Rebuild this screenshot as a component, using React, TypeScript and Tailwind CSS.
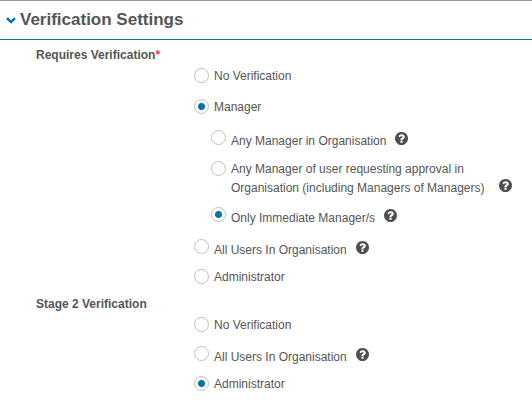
import { useState } from "react";

type Option = {
  value: string;
  label: string;
  help?: boolean;
  nested?: boolean;
  spacing: string;
};

const primaryOptions: Option[] = [
  { value: "none", label: "No Verification", spacing: "mb-3" },
  { value: "manager", label: "Manager", spacing: "mb-3" },
  { value: "any-manager", label: "Any Manager in Organisation", help: true, nested: true, spacing: "mb-[9px]" },
  {
    value: "any-manager-of-user",
    label: "Any Manager of user requesting approval in Organisation (including Managers of Managers)",
    help: true,
    nested: true,
    spacing: "mb-2",
  },
  { value: "immediate", label: "Only Immediate Manager/s", help: true, nested: true, spacing: "mb-[10px]" },
  { value: "all-users", label: "All Users In Organisation", help: true, spacing: "mb-2" },
  { value: "admin", label: "Administrator", spacing: "mb-2" },
];

const stageTwoOptions: Option[] = [
  { value: "none", label: "No Verification", spacing: "mb-[10px]" },
  { value: "all-users", label: "All Users In Organisation", help: true, spacing: "mb-2" },
  { value: "admin", label: "Administrator", spacing: "mb-2" },
];

function HelpIcon() {
  return (
    <svg viewBox="128 128 1536 1536" className="size-[13px] fill-[#4f4f4f]" aria-hidden="true">
      <path d="M1024 1376v-192q0-14-9-23t-23-9h-192q-14 0-23 9t-9 23v192q0 14 9 23t23 9h192q14 0 23-9t9-23zm256-672q0-88-55.5-163t-138.5-116-170-41q-243 0-371 213-15 24 8 42l132 100q7 6 19 6 16 0 25-12 53-68 86-92 34-24 86-24 48 0 85.5 26t37.5 59q0 38-20 61t-68 45q-63 28-115.5 86.5t-52.5 125.5v36q0 14 9 23t23 9h192q14 0 23-9t9-23q0-19 21.5-49.5t54.5-49.5q32-18 49-28.5t46-35 44.5-48 28-60.5 12.5-81zm384 192q0 209-103 385.5t-279.5 279.5-385.5 103-385.5-103-279.5-279.5-103-385.5 103-385.5 279.5-279.5 385.5-103 385.5 103 279.5 279.5 103 385.5z" />
    </svg>
  );
}

function RadioRow({
  option,
  group,
  checked,
  onSelect,
}: {
  option: Option;
  group: string;
  checked: boolean;
  onSelect: () => void;
}) {
  const id = `${group}-${option.value}`;
  const multiline = option.value === "any-manager-of-user";
  return (
    <div className={`flex items-start gap-[5px] ${option.nested ? "pl-[17px]" : ""} ${option.spacing}`}>
      <input
        id={id}
        type="radio"
        name={group}
        checked={checked}
        onChange={onSelect}
        className="mt-px size-[15px] shrink-0 appearance-none rounded-full border border-[#bfbfbf] bg-white checked:bg-[radial-gradient(circle,#0073ae_3px,transparent_4px)]"
      />
      <div
        className={`flex items-end gap-[9px] ${option.help && !multiline ? "pt-[3px]" : ""}`}
      >
        <label htmlFor={id} className="max-w-[259px]">
          {option.label}
        </label>
        {option.help && (
          <button type="button" aria-label={`Help: ${option.label}`} className="mb-[6px]">
            <HelpIcon />
          </button>
        )}
      </div>
    </div>
  );
}

function VerificationGroup({
  title,
  name,
  required,
  options,
  initial,
  className,
}: {
  title: string;
  name: string;
  required?: boolean;
  options: Option[];
  initial: string[];
  className: string;
}) {
  const [selected, setSelected] = useState(initial);
  const pick = (option: Option) =>
    setSelected(option.nested ? ["manager", option.value] : [option.value]);
  return (
    <div role="radiogroup" aria-labelledby={`${name}-title`} className={className}>
      <h3 id={`${name}-title`} className="pl-9 font-bold">
        {title}
        {required && <span className="text-[#f0373f]">*</span>}
      </h3>
      <div className="pt-[2px] pl-[194px]">
        {options.map((option) => (
          <RadioRow
            key={option.value}
            option={option}
            group={option.nested ? `${name}-manager` : name}
            checked={selected.includes(option.value)}
            onSelect={() => pick(option)}
          />
        ))}
      </div>
    </div>
  );
}

export default function App() {
  const [open, setOpen] = useState(true);
  return (
    <main className="min-h-screen border-t border-[#999] bg-white font-['Liberation_Sans',Arial,sans-serif] text-[12px] leading-[19px] text-[#555]">
      <h2 className="border-b border-[#0873a8] text-[17px] leading-[38px] font-bold">
        <button
          type="button"
          aria-expanded={open}
          onClick={() => setOpen(!open)}
          className="flex w-full items-center gap-1 pl-[6px] text-left"
        >
          <svg viewBox="0 0 10 7" className="h-[7px] w-[10px] fill-none stroke-[#0073ae] stroke-[2.4]" aria-hidden="true">
            <path d="M1 1.2 5 5 9 1.2" />
          </svg>
          Verification Settings
        </button>
      </h2>
      {open && (
        <>
          <VerificationGroup
            title="Requires Verification"
            name="primary"
            required
            options={primaryOptions}
            initial={["manager", "immediate"]}
            className="pt-[6px]"
          />
          <VerificationGroup
            title="Stage 2 Verification"
            name="stage-two"
            options={stageTwoOptions}
            initial={["admin"]}
            className=""
          />
        </>
      )}
    </main>
  );
}
